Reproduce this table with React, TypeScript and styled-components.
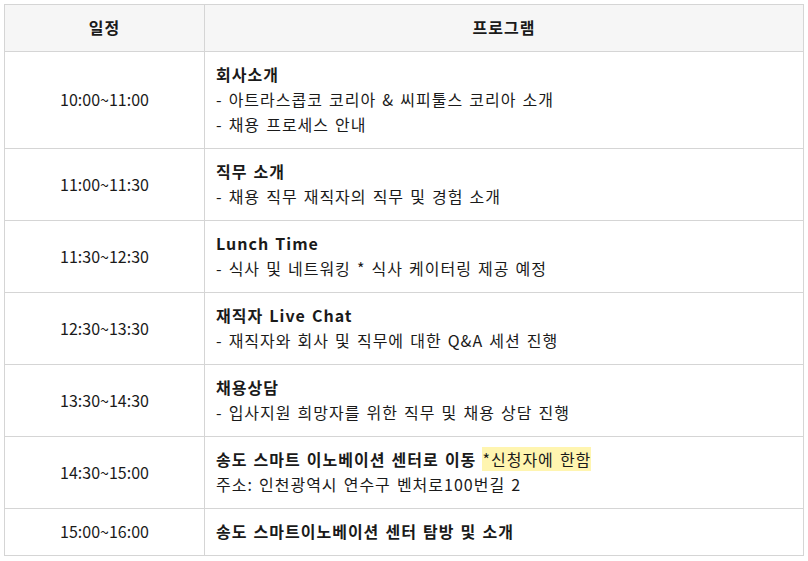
import React from "react";
import styled, { createGlobalStyle } from "styled-components";

const Global = createGlobalStyle`
  html, body { margin: 0; padding: 0; background: #fff; }
  body { font-family: "Noto Sans CJK KR", "Noto Sans", sans-serif; color: #1a1a1a; }
`;

const Wrap = styled.div`
  padding: 4px;
`;

const Table = styled.table`
  width: 800px;
  border-collapse: collapse;
  table-layout: fixed;
  font-size: 16px;
  line-height: 25px;
`;

const Col = styled.col<{ $w?: number }>`
  ${(p) => (p.$w ? `width: ${p.$w}px;` : "")}
`;

const Th = styled.th`
  background: #f6f6f6;
  border: 1px solid #d5d5d5;
  padding: 10px 12px 11px;
  font-weight: 700;
  text-align: center;
  letter-spacing: 1px;
  color: #1a1a1a;
`;

const TimeCell = styled.td`
  border: 1px solid #d5d5d5;
  padding: 10px 12px 11px;
  text-align: center;
  vertical-align: middle;
`;

const ProgCell = styled.td`
  border: 1px solid #d5d5d5;
  padding: 10px 11px 11px;
  text-align: left;
  vertical-align: middle;
  letter-spacing: 1px;
  word-spacing: 1.5px;
`;

const Title = styled.div`
  font-weight: 700;
`;

const Line = styled.div``;

const Mark = styled.span`
  background: #fff5b0;
  font-weight: 400;
`;

type Row = { time: string; title: React.ReactNode; lines: string[] };

const rows: Row[] = [
  {
    time: "10:00~11:00",
    title: "회사소개",
    lines: ["- 아트라스콥코 코리아 & 씨피툴스 코리아 소개", "- 채용 프로세스 안내"],
  },
  { time: "11:00~11:30", title: "직무 소개", lines: ["- 채용 직무 재직자의 직무 및 경험 소개"] },
  { time: "11:30~12:30", title: "Lunch Time", lines: ["- 식사 및 네트워킹 * 식사 케이터링 제공 예정"] },
  { time: "12:30~13:30", title: "재직자 Live Chat", lines: ["- 재직자와 회사 및 직무에 대한 Q&A 세션 진행"] },
  { time: "13:30~14:30", title: "채용상담", lines: ["- 입사지원 희망자를 위한 직무 및 채용 상담 진행"] },
  {
    time: "14:30~15:00",
    title: (
      <>
        송도 스마트 이노베이션 센터로 이동 <Mark>*신청자에 한함</Mark>
      </>
    ),
    lines: ["주소: 인천광역시 연수구 벤처로100번길 2"],
  },
  { time: "15:00~16:00", title: "송도 스마트이노베이션 센터 탐방 및 소개", lines: [] },
];

export default function App() {
  return (
    <Wrap>
      <Global />
      <Table>
        <colgroup>
          <Col $w={200} />
          <Col />
        </colgroup>
        <thead>
          <tr>
            <Th>일정</Th>
            <Th>프로그램</Th>
          </tr>
        </thead>
        <tbody>
          {rows.map((r) => (
            <tr key={r.time}>
              <TimeCell>{r.time}</TimeCell>
              <ProgCell>
                <Title>{r.title}</Title>
                {r.lines.map((l) => (
                  <Line key={l}>{l}</Line>
                ))}
              </ProgCell>
            </tr>
          ))}
        </tbody>
      </Table>
    </Wrap>
  );
}
